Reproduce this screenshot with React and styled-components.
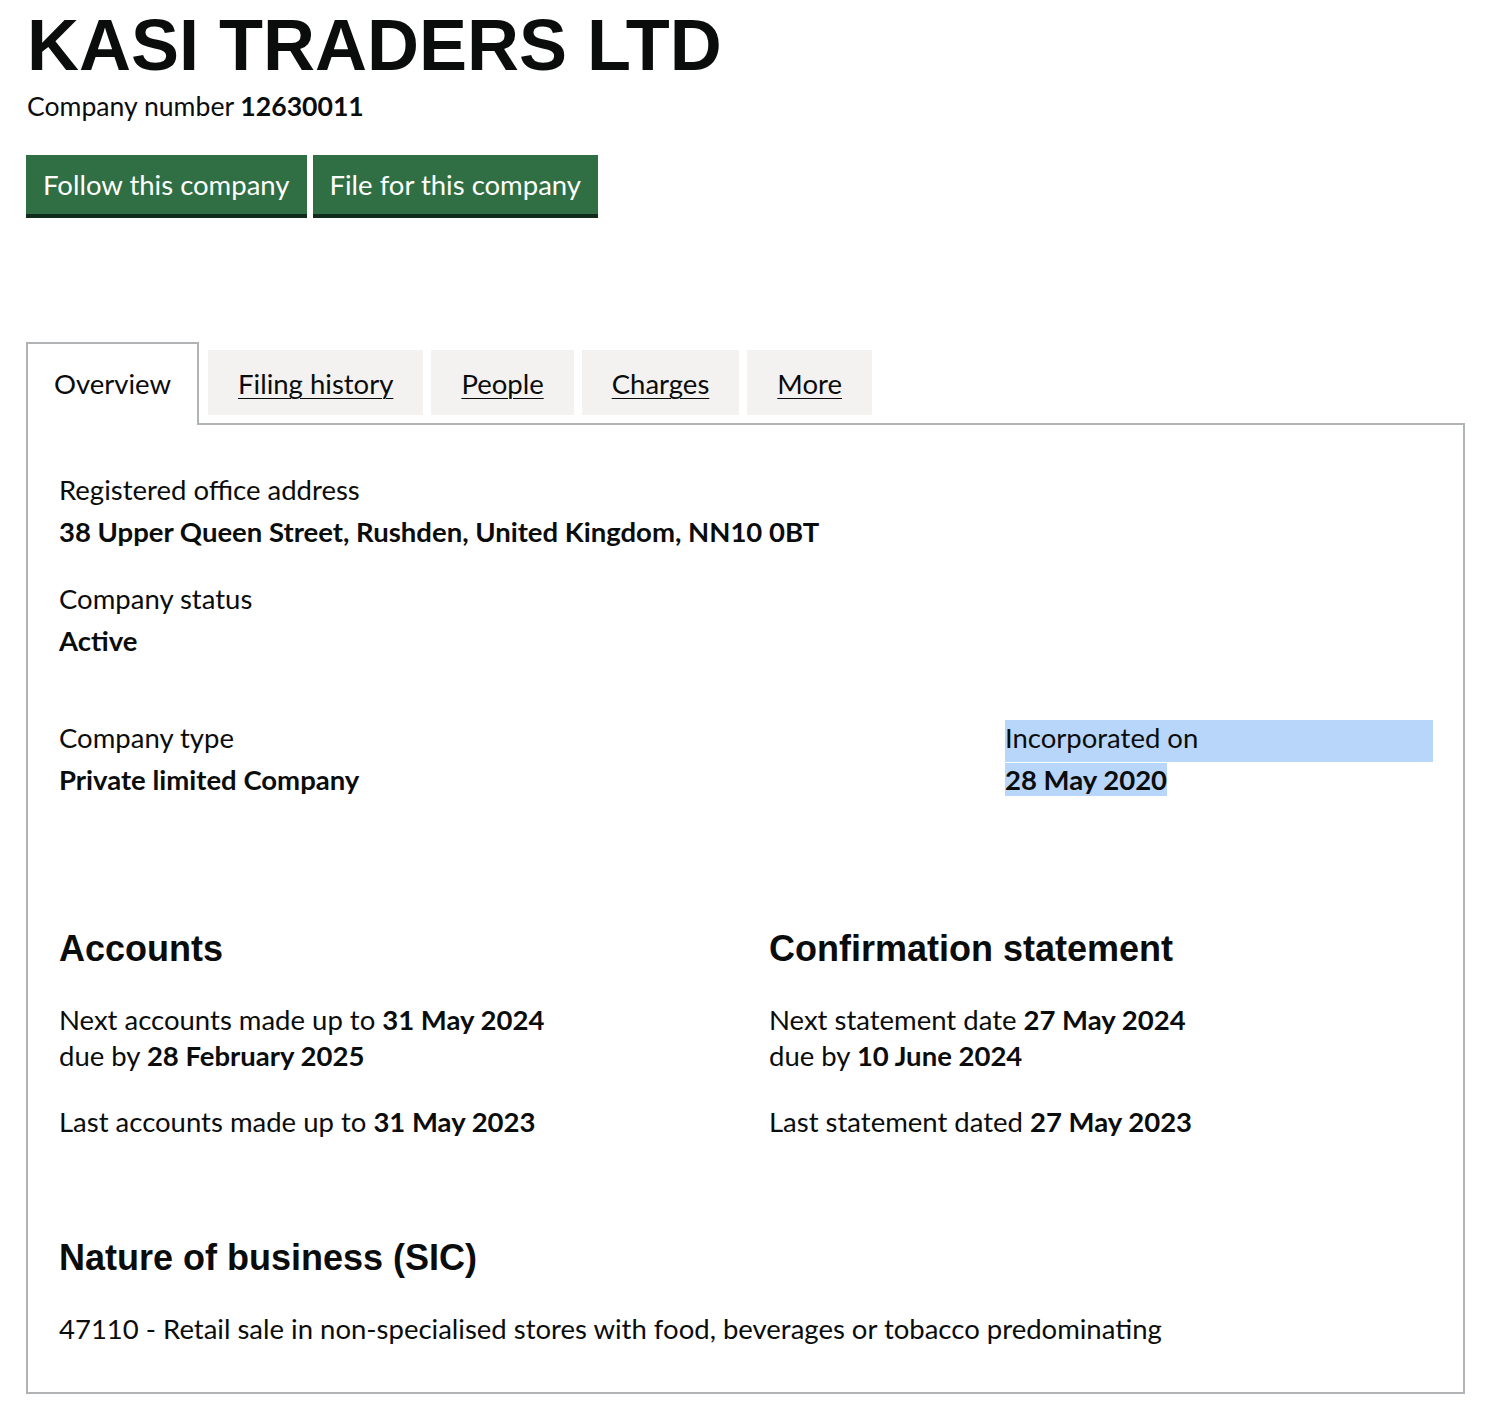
import React from 'react'
import styled, { createGlobalStyle } from 'styled-components'

const GlobalStyle = createGlobalStyle`
  body {
    margin: 0;
    background: #ffffff;
    color: #0b0c0c;
    font-family: Lato, "Noto Sans", sans-serif;
  }
`

//Style
const Page = styled.div`
  padding: 0 24px 0 26px;
`

const Title = styled.h1`
  font-family: "Liberation Sans", Arial, sans-serif;
  font-weight: 700;
  font-size: 72px;
  line-height: 84px;
  margin: 3px 0 0 1px;
`

const CompanyNumber = styled.p`
  font-size: 26.6px;
  line-height: 36px;
  margin: 1px 0 0 1px;
  strong {
    font-weight: 700;
  }
`

const ButtonRow = styled.div`
  display: flex;
  gap: 6px;
  margin-top: 31px;
`

const GreenBtn = styled.button`
  font-family: inherit;
  font-size: 27.5px;
  line-height: 36px;
  color: #ffffff;
  background-color: #2f6f43;
  border: none;
  border-radius: 0;
  padding: 12px 17px 11px;
  box-shadow: 0 4px 0 #112a19;
  cursor: pointer;
`

const TabList = styled.ul`
  display: flex;
  align-items: flex-start;
  gap: 8px;
  list-style: none;
  margin: 128px 0 0;
  padding: 0;
`

const Tab = styled.li`
  font-size: 27.5px;
  line-height: 36px;
  padding: ${(props) => (props.selected ? '22px 26px 23px' : '16px 30px 13px')};
  margin-top: ${(props) => (props.selected ? '0' : '8px')};
  margin-bottom: ${(props) => (props.selected ? '-2px' : '0')};
  margin-right: ${(props) => (props.selected ? '1px' : '0')};
  background-color: ${(props) => (props.selected ? '#ffffff' : '#f3f2f1')};
  border: ${(props) => (props.selected ? '2px solid #b1b4b6' : 'none')};
  border-bottom: none;
  position: relative;
  z-index: ${(props) => (props.selected ? 1 : 0)};

  a {
    color: #0b0c0c;
    text-decoration: underline;
    text-decoration-thickness: 1px;
    text-underline-offset: 4px;
  }
`

const Panel = styled.div`
  border: 2px solid #b1b4b6;
  padding: 47px 30px 45px 31px;
  width: 1439px;
  box-sizing: border-box;
`

const Field = styled.dl`
  margin: 0 0 ${(props) => (props.gap === undefined ? 31 : props.gap)}px;
`

const Label = styled.dt`
  font-size: 27.5px;
  line-height: 36px;
  padding-bottom: 6px;
  background-color: ${(props) => (props.highlight ? '#b8d6f9' : 'transparent')};
`

const Value = styled.dd`
  margin: 0;
  font-size: 27.5px;
  line-height: 36px;
  font-weight: 700;

  span {
    background-color: ${(props) => (props.highlight ? '#b8d6f9' : 'transparent')};
  }
`

const FieldRow = styled.div`
  display: grid;
  grid-template-columns: 1fr 428px;
  margin-bottom: 131px;
`

const TwoCols = styled.div`
  display: grid;
  grid-template-columns: 1fr 1fr;
  column-gap: 46px;
  margin-bottom: 98px;
`

const Heading = styled.h2`
  font-family: "Liberation Sans", Arial, sans-serif;
  font-weight: 700;
  font-size: 36px;
  line-height: 40px;
  margin: 0 0 33px;
`

const Text = styled.p`
  font-size: 27.5px;
  line-height: 36px;
  margin: 0 0 ${(props) => (props.last ? 0 : 30)}px;

  strong {
    font-weight: 700;
  }
`

function App() {
  return (
    <Page>
      <GlobalStyle />
      <Title>KASI TRADERS LTD</Title>
      <CompanyNumber>
        Company number <strong>12630011</strong>
      </CompanyNumber>
      <ButtonRow>
        <GreenBtn>Follow this company</GreenBtn>
        <GreenBtn>File for this company</GreenBtn>
      </ButtonRow>

      <TabList>
        <Tab selected>Overview</Tab>
        <Tab>
          <a href="#filing">Filing history</a>
        </Tab>
        <Tab>
          <a href="#people">People</a>
        </Tab>
        <Tab>
          <a href="#charges">Charges</a>
        </Tab>
        <Tab>
          <a href="#more">More</a>
        </Tab>
      </TabList>

      <Panel>
        <Field>
          <Label>Registered office address</Label>
          <Value>38 Upper Queen Street, Rushden, United Kingdom, NN10 0BT</Value>
        </Field>
        <Field gap={61}>
          <Label>Company status</Label>
          <Value>Active</Value>
        </Field>
        <FieldRow>
          <Field gap={0}>
            <Label>Company type</Label>
            <Value>Private limited Company</Value>
          </Field>
          <Field gap={0}>
            <Label highlight>Incorporated on</Label>
            <Value highlight>
              <span>28 May 2020</span>
            </Value>
          </Field>
        </FieldRow>

        <TwoCols>
          <div>
            <Heading>Accounts</Heading>
            <Text>
              Next accounts made up to <strong>31 May 2024</strong>
              <br />
              due by <strong>28 February 2025</strong>
            </Text>
            <Text last>
              Last accounts made up to <strong>31 May 2023</strong>
            </Text>
          </div>
          <div>
            <Heading>Confirmation statement</Heading>
            <Text>
              Next statement date <strong>27 May 2024</strong>
              <br />
              due by <strong>10 June 2024</strong>
            </Text>
            <Text last>
              Last statement dated <strong>27 May 2023</strong>
            </Text>
          </div>
        </TwoCols>

        <Heading>Nature of business (SIC)</Heading>
        <Text last>
          47110 - Retail sale in non-specialised stores with food, beverages or tobacco predominating
        </Text>
      </Panel>
    </Page>
  )
}

export default App
